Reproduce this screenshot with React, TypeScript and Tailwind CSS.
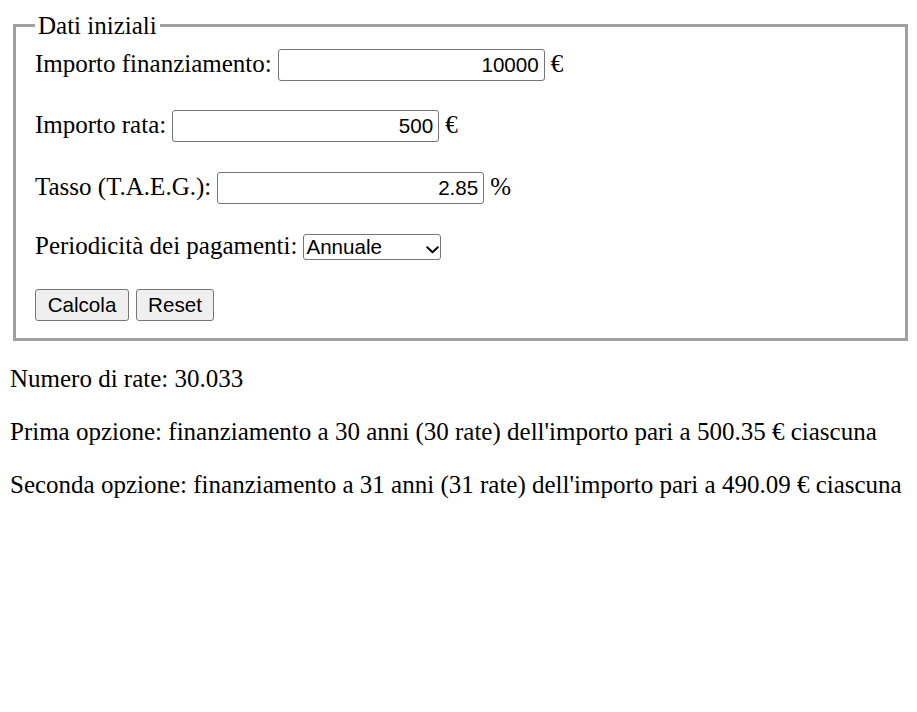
import React from 'react';

const serif = "font-['Liberation_Serif','Times_New_Roman',serif]";
const sans = "font-['Liberation_Sans',Arial,sans-serif]";

const Field: React.FC<{ label: string; value: string; unit: string; className?: string }> = ({ label, value, unit, className }) => (
  <div className={`flex items-baseline gap-[6px] h-[32px] ${className ?? ''}`}>
    <span className="leading-[28px]">{label}</span>
    <input
      type="text"
      defaultValue={value}
      className={`${sans} w-[267px] h-[32px] px-[5px] text-right text-[20.6px] text-black bg-white border border-[#767676] rounded-[3px] outline-none`}
    />
    <span className="leading-[28px]">{unit}</span>
  </div>
);

const App: React.FC = () => {
  return (
    <div className={`${serif} text-[25px] text-black bg-white min-h-[712px] pt-[11px]`}>
      {/* Dati iniziali */}
      <fieldset className="ml-[13px] mr-[9px] border-[3px] border-[#a0a0a0] pl-[19px] pr-[19px] pt-[9px] pb-[17px]">
        <legend className="px-[3px] leading-[29px]">Dati iniziali</legend>

        <Field label="Importo finanziamento:" value="10000" unit="€" />
        <Field label="Importo rata:" value="500" unit="€" className="mt-[29px]" />
        <Field label="Tasso (T.A.E.G.):" value="2.85" unit="%" className="mt-[30px]" />

        <div className="flex items-baseline gap-[6px] mt-[28px]">
          <span className="leading-[28px]">Periodicità dei pagamenti:</span>
          <span className="relative inline-flex">
            <select
              defaultValue="Annuale"
              className={`${sans} appearance-none w-[138px] h-[26px] text-[20.6px] leading-[24px] text-black bg-white border border-[#767676] rounded-[3px] pl-[2px] pr-[20px]`}
            >
              <option>Mensile</option>
              <option>Trimestrale</option>
              <option>Semestrale</option>
              <option>Annuale</option>
            </select>
            <svg
              className="pointer-events-none absolute right-[2px] top-[12px]"
              width="13"
              height="8"
              viewBox="0 0 13 8"
              fill="none"
            >
              <path d="M1.2 1.2 L6.5 6.3 L11.8 1.2" stroke="#000" strokeWidth="1.9" strokeLinecap="round" strokeLinejoin="round" />
            </svg>
          </span>
        </div>

        <div className={`${sans} flex gap-[7px] mt-[29px] text-[20.6px]`}>
          <button type="button" className="w-[94px] h-[32px] bg-[#efefef] border border-[#767676] rounded-[3px] text-black">
            Calcola
          </button>
          <button type="button" className="w-[78px] h-[32px] bg-[#efefef] border border-[#767676] rounded-[3px] text-black">
            Reset
          </button>
        </div>
      </fieldset>

      {/* Risultati */}
      <div className="pl-[10px] leading-[28px]">
        <p className="mt-[24px]">Numero di rate: 30.033</p>
        <p className="mt-[25px]">Prima opzione: finanziamento a 30 anni (30 rate) dell'importo pari a 500.35 € ciascuna</p>
        <p className="mt-[25px]">Seconda opzione: finanziamento a 31 anni (31 rate) dell'importo pari a 490.09 € ciascuna</p>
      </div>
    </div>
  );
};

export default App;
